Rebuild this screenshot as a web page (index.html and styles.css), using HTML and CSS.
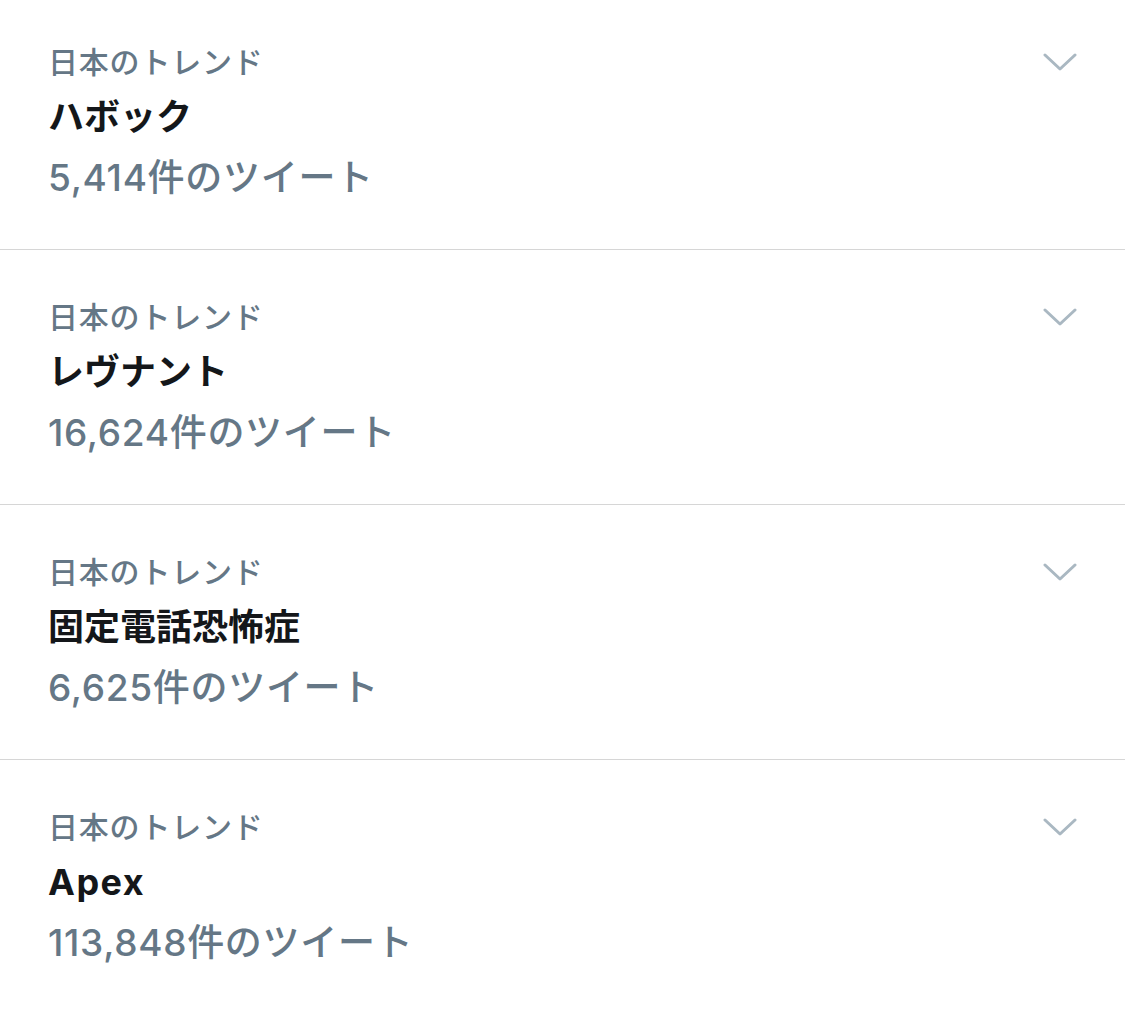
FILE: index.html
```html
<!DOCTYPE html>
<html lang="ja">
<head>
  <meta charset="UTF-8">
  <title>日本のトレンド</title>
  <link rel="stylesheet" href="styles.css">
</head>
<body>
  <div class="trend-list">
    <div class="trend">
      <div class="trend-body">
        <div class="trend-label">日本のトレンド</div>
        <div class="trend-title">ハボック</div>
        <div class="trend-count">5,414件のツイート</div>
      </div>
      <svg class="chevron" viewBox="0 0 34 20"><path d="M2 3 L17 17 L32 3"/></svg>
    </div>
    <div class="trend">
      <div class="trend-body">
        <div class="trend-label">日本のトレンド</div>
        <div class="trend-title">レヴナント</div>
        <div class="trend-count">16,624件のツイート</div>
      </div>
      <svg class="chevron" viewBox="0 0 34 20"><path d="M2 3 L17 17 L32 3"/></svg>
    </div>
    <div class="trend">
      <div class="trend-body">
        <div class="trend-label">日本のトレンド</div>
        <div class="trend-title">固定電話恐怖症</div>
        <div class="trend-count">6,625件のツイート</div>
      </div>
      <svg class="chevron" viewBox="0 0 34 20"><path d="M2 3 L17 17 L32 3"/></svg>
    </div>
    <div class="trend">
      <div class="trend-body">
        <div class="trend-label">日本のトレンド</div>
        <div class="trend-title latin">Apex</div>
        <div class="trend-count">113,848件のツイート</div>
      </div>
      <svg class="chevron" viewBox="0 0 34 20"><path d="M2 3 L17 17 L32 3"/></svg>
    </div>
  </div>
</body>
</html>
```

FILE: styles.css
```css
body {
  margin: 0;
  background: #fff;
  font-family: Inter, "Noto Sans CJK JP", sans-serif;
  overflow: hidden;
}

.trend-list {
  margin-top: -5px;
}

.trend {
  display: flex;
  justify-content: space-between;
  align-items: flex-start;
  padding: 47px 48px 45px 48px;
  border-bottom: 1px solid #d6d6d6;
}

.trend-label {
  font-size: 30px;
  line-height: 40px;
  font-weight: 500;
  letter-spacing: 0.8px;
  color: #657786;
}

.trend-title {
  font-size: 36px;
  line-height: 70px;
  font-weight: 700;
  color: #14171a;
}

.trend-title.latin {
  letter-spacing: 1.5px;
}

.trend-count {
  font-size: 37px;
  line-height: 52px;
  font-weight: 500;
  letter-spacing: 0.7px;
  color: #657786;
}

.chevron {
  width: 34px;
  height: 20px;
  margin-top: 10px;
  fill: none;
  stroke: #aab8c2;
  stroke-width: 3;
  stroke-linecap: round;
  stroke-linejoin: round;
}
```
